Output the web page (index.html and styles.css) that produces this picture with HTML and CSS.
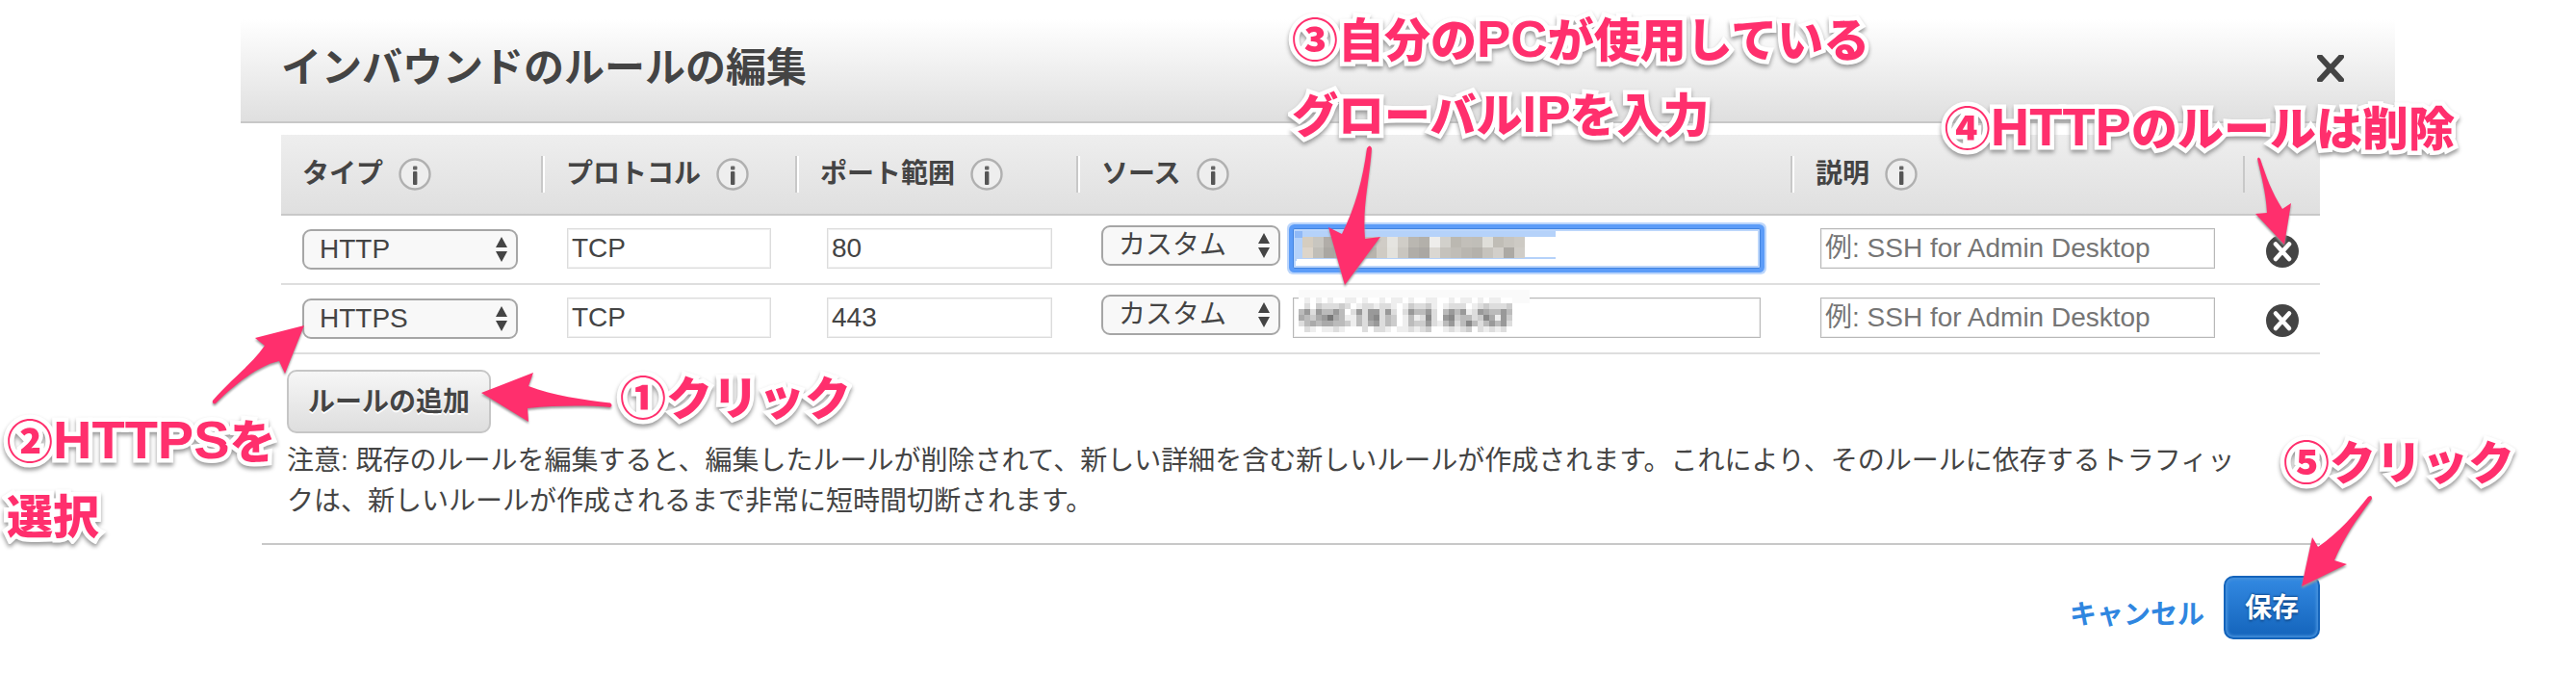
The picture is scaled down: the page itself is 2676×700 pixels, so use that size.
FILE: index.html
```html
<!DOCTYPE html>
<html lang="ja">
<head>
<meta charset="utf-8">
<title>インバウンドのルールの編集</title>
<link rel="stylesheet" href="styles.css">
</head>
<body>
<svg class="defs" aria-hidden="true">
  <symbol id="info" viewBox="0 0 34 34"><circle cx="17" cy="17" r="15.5" fill="#eee" stroke="#b0b0b0" stroke-width="2.4"/><rect x="15" y="8.5" width="4.4" height="4" rx="1" fill="#666"/><rect x="15" y="14" width="4.4" height="14" rx="1" fill="#555"/></symbol>
  <symbol id="updown" viewBox="0 0 14 26"><path d="M7 0l6 11H1zM7 26l6-11H1z" fill="#444"/></symbol>
  <symbol id="remove" viewBox="0 0 34 34"><circle cx="17" cy="17" r="17" fill="#444"/><path d="M10 9.500l14 15.500M24 9.500L10 25" stroke="#fff" stroke-width="4.600" stroke-linecap="round"/></symbol>
</svg>
<main class="dialog">
  <header class="dialog-head">
    <h1>インバウンドのルールの編集</h1>
    <button class="icon-button" type="button" aria-label="閉じる"><svg width="28" height="28" viewBox="0 0 28 28"><path d="M3 2l22 24M25 2L3 26" stroke="#444" stroke-width="6" stroke-linecap="round"/></svg></button>
  </header>
  <section class="dialog-body">
    <table class="rules">
      <colgroup><col class="col-type"><col class="col-protocol"><col class="col-port"><col><col class="col-note"><col class="col-remove"></colgroup>
      <thead>
        <tr>
          <th scope="col"><div class="label first">タイプ<svg class="info"><use href="#info"/></svg></div></th>
          <th scope="col"><div class="label">プロトコル<svg class="info"><use href="#info"/></svg></div></th>
          <th scope="col"><div class="label">ポート範囲<svg class="info"><use href="#info"/></svg></div></th>
          <th scope="col"><div class="label">ソース<svg class="info"><use href="#info"/></svg></div></th>
          <th scope="col"><div class="label">説明<svg class="info"><use href="#info"/></svg></div></th>
          <td></td>
        </tr>
      </thead>
      <tbody>
        <tr>
          <td class="cell-type"><div class="pick"><select aria-label="タイプ"><option>HTTP</option></select><svg class="updown"><use href="#updown"/></svg></div></td>
          <td class="cell-protocol"><input class="field" aria-label="プロトコル" value="TCP"></td>
          <td class="cell-port"><input class="field" aria-label="ポート範囲" value="80"></td>
          <td class="cell-source"><div class="source">
            <div class="pick"><select aria-label="ソース"><option>カスタム</option></select><svg class="updown"><use href="#updown"/></svg></div>
            <div class="address"><input class="field strong focused" aria-label="ソース IP"><svg class="mask" id="mask-selected" width="280" height="50" aria-hidden="true"></svg></div>
          </div></td>
          <td class="cell-note"><input class="field strong" aria-label="説明" placeholder="例: SSH for Admin Desktop"></td>
          <td class="cell-remove"><button class="icon-button" type="button" aria-label="削除"><svg width="34" height="34"><use href="#remove"/></svg></button></td>
        </tr>
        <tr>
          <td class="cell-type"><div class="pick"><select aria-label="タイプ"><option>HTTPS</option></select><svg class="updown"><use href="#updown"/></svg></div></td>
          <td class="cell-protocol"><input class="field" aria-label="プロトコル" value="TCP"></td>
          <td class="cell-port"><input class="field" aria-label="ポート範囲" value="443"></td>
          <td class="cell-source"><div class="source">
            <div class="pick"><select aria-label="ソース"><option>カスタム</option></select><svg class="updown"><use href="#updown"/></svg></div>
            <div class="address"><input class="field strong" aria-label="ソース IP"><svg class="mask" id="mask-plain" width="280" height="50" aria-hidden="true"></svg></div>
          </div></td>
          <td class="cell-note"><input class="field strong" aria-label="説明" placeholder="例: SSH for Admin Desktop"></td>
          <td class="cell-remove"><button class="icon-button" type="button" aria-label="削除"><svg width="34" height="34"><use href="#remove"/></svg></button></td>
        </tr>
      </tbody>
    </table>
    <button class="add" type="button">ルールの追加</button>
    <p class="notice">注意: 既存のルールを編集すると、編集したルールが削除されて、新しい詳細を含む新しいルールが作成されます。これにより、そのルールに依存するトラフィックは、新しいルールが作成されるまで非常に短時間切断されます。</p>
  </section>
  <footer class="dialog-foot">
    <a href="#" class="cancel">キャンセル</a>
    <button class="save" type="button">保存</button>
  </footer>
</main>

<p class="callout step-add">①クリック</p>
<p class="callout step-type">②<span class="latin">HTTPS</span>を<br>選択</p>
<p class="callout step-ip">③自分の<span class="latin">PC</span>が使用している<br>グローバル<span class="latin">IP</span>を入力</p>
<p class="callout step-remove">④<span class="latin">HTTP</span>のルールは削除</p>
<p class="callout step-save">⑤クリック</p>

<svg class="arrow arrow-add" width="140" height="60" viewBox="498 382 140 60"><path d="M500 408L554 387L549 401C575 411 605 415 634 418.500Q637 421 634 423C610 421 580 421 548 424L549 438Z"/></svg>
<svg class="arrow arrow-type" width="104" height="90" viewBox="216 334 104 90"><path d="M316 338L296 388L290 375C270 379 245 398 224 419Q220 420 221 416C240 394 260 380 275 359L265 351Z"/></svg>
<svg class="arrow arrow-ip" width="64" height="152" viewBox="1376 148 64 152"><path d="M1397 296L1380 236L1394 243C1408 215 1416 185 1420 154Q1423 149 1425 154C1423 185 1415 215 1418 248L1434 246Z"/></svg>
<svg class="arrow arrow-remove" width="48" height="96" viewBox="2338 160 48 96"><path d="M2373 254L2343 222L2355 221C2354 200 2349 183 2345 165Q2346 162 2348 165C2354 183 2360 200 2371 217L2380 211Z"/></svg>
<svg class="arrow arrow-save" width="80" height="104" viewBox="2387 510 80 104"><path d="M2391 609L2402 558L2408 568C2430 553 2446 534 2460 516Q2464 513 2464 518C2448 540 2436 556 2425 582L2438 586Z"/></svg>
<script src="mask.js"></script>
</body>
</html>
```
FILE: styles.css
```css
* { box-sizing: border-box; }
body {
  margin: 0;
  padding-top: 20px;
  position: relative;
  background: #fff;
  color: #444;
  font-family: "Liberation Sans", "Noto Sans CJK JP", sans-serif;
  font-size: 28px;
  overflow-x: hidden;
}
.defs { position: absolute; width: 0; height: 0; }
button, input, select { font: inherit; color: inherit; margin: 0; }
.dialog { margin: 0 188px 32px 250px; }

.dialog-head {
  display: flex;
  align-items: center;
  justify-content: space-between;
  height: 108px;
  padding: 0 53px 4px 42px;
  background: linear-gradient(#fff, #dfdfdf);
  border-bottom: 2px solid #c8c8c8;
}
h1 { margin: 0; font-size: 42px; line-height: 60px; }
.icon-button { display: block; padding: 0; border: 0; background: none; }
.icon-button svg { display: block; }

.dialog-body { padding: 12px 78px 22px 42px; }
.rules { width: 100%; table-layout: fixed; border-collapse: separate; border-spacing: 0; }
.col-type { width: 272px; }
.col-protocol { width: 264px; }
.col-port { width: 292px; }
.col-note { width: 470px; }
.col-remove { width: 78px; }
thead tr { background: linear-gradient(#eee, #dfdfdf); }
th, thead td { height: 84px; padding: 0; border-bottom: 2px solid #c8c8c8; text-align: left; }
.label {
  display: flex;
  align-items: center;
  gap: 16px;
  height: 38px;
  padding-left: 22px;
  border-left: 2px solid #fff;
  border-right: 2px solid #c8c8c8;
  line-height: 34px;
}
.label.first { border-left: 0; }
.info { width: 34px; height: 34px; }

tbody td { height: 72px; padding: 0; vertical-align: top; border-bottom: 2px solid #dedede; }
tbody .cell-type { padding: 14px 26px 0 22px; }
tbody .cell-protocol { padding: 13px 27px 0 25px; }
tbody .cell-port { padding: 13px 27px 0 31px; }
tbody .cell-source { padding: 10px 33px 0 24px; }
tbody .cell-note { padding: 13px 31px 0 29px; }
tbody .cell-remove { padding: 20px 22px 0; }

.pick { position: relative; }
.pick select {
  display: block;
  appearance: none;
  width: 100%;
  height: 42px;
  padding: 0 40px 2px 16px;
  border: 2px solid #a6a6a6;
  border-radius: 9px;
  background: #f8f8f8;
}
.updown { position: absolute; right: 10px; top: 8px; width: 14px; height: 26px; pointer-events: none; }
.field {
  display: block;
  width: 100%;
  height: 42px;
  padding: 0 4px;
  border: 1px solid #dcdcdc;
  box-shadow: inset 0 0 0 1px #f0f0f0;
  background: #fff;
  outline: 0;
}
.field.strong { border-color: #b8b8b8; }
.field::placeholder { color: #757575; opacity: 1; }
.field.focused { border-color: #4284e0; box-shadow: inset 0 0 0 2px #bcd6fb, 0 0 0 4px #5c9cf8, 0 0 0 6px #bcd6fb; border-radius: 2px; }
.source { display: flex; gap: 13px; }
.source .pick { flex: 0 0 186px; }
.address { position: relative; flex: 1; margin-top: 3px; }
.mask { position: absolute; left: 0; top: -8px; pointer-events: none; }

.add, .save { display: block; height: 66px; font-weight: bold; border-radius: 10px; padding: 0 20px 4px; }
.add {
  margin: 16px 0 8px 6px;
  border: 2px solid #c6c6c6;
  background: linear-gradient(#f6f6f6, #dedede);
  text-shadow: 0 2px 0 #fff;
}
.notice { margin: 0; padding: 0 74px 0 6px; line-height: 42px; }
.dialog-foot {
  display: flex;
  justify-content: flex-end;
  align-items: flex-start;
  gap: 20px;
  margin: 0 78px 0 22px;
  padding-top: 32px;
  border-top: 2px solid #c8c8c8;
}
.cancel { margin-top: 20px; line-height: 42px; color: #2f86e0; font-weight: bold; text-decoration: none; }
.save {
  border: 2px solid #1464bb;
  background: linear-gradient(#3389e2, #1464bb);
  box-shadow: inset 0 0 3px 2px #4590dc;
  color: #fff;
  text-shadow: 0 -1px 2px #124f94, 0 2px 2px #124f94;
}

.callout {
  position: absolute;
  margin: 0;
  font-size: 48px;
  font-weight: 900;
  line-height: 78px;
  white-space: nowrap;
  color: #ff2f6d;
  -webkit-text-stroke: 9px #fff;
  paint-order: stroke fill;
  filter: drop-shadow(0 3px 2px #999);
}
.latin { font-size: 56px; line-height: 48px; }
.step-ip .latin { font-size: 53px; }
.step-add { left: 644px; top: 376px; }
.step-type { left: 7px; top: 421px; }
.step-ip { left: 1342px; top: 4px; }
.step-remove { right: 126px; top: 96px; }
.step-save { right: 64px; top: 443px; }
.arrow { position: absolute; overflow: visible; fill: #ff2f6d; filter: drop-shadow(0 2px 1px #999); pointer-events: none; }
.arrow-add { left: 498px; top: 382px; }
.arrow-type { left: 216px; top: 334px; }
.arrow-ip { left: 1376px; top: 148px; }
.arrow-remove { right: 290px; top: 160px; }
.arrow-save { right: 209px; top: 510px; }
```
FILE: mask.js
```javascript
function cell(svg, x, y, w, h, fill) {
  const r = document.createElementNS("http://www.w3.org/2000/svg", "rect");
  Object.entries({ x, y, width: w, height: h, fill }).forEach(([k, v]) => r.setAttribute(k, v));
  svg.append(r);
}

const selected = document.getElementById("mask-selected");
cell(selected, 2, 11, 271, 31, "#b5d2fa");
cell(selected, 4, 40, 269, 4, "#fff");
cell(selected, 241, 17, 33, 21, "#fff");
cell(selected, 2, 11, 8, 7, "#8fb9f7");
[
  "d5cdc0 c8c6c0 b1ada8 b8b4ae c0bcb6 c4c0b9 c6c2bb d0ccc6 e5e4e0 d0cdc7 bab7b1 b3b0aa eeedeb d2d0cb bbb8b1 c2bfb9 c0beb8 dfded9 c0bdb6 c8c5bf cdcac4",
  "ddd5ca c0beb8 aaa7a2 b0ada6 b8b4ae b8b4ad b8b4ad cfcbc4 e3e2dd c9c6c0 b0ada8 aaa7a3 dad7d2 c5c2bc c0bdb7 b9b6b0 b4b1ab c6c3bd d2cfca aca9a4 d0cdc8",
].forEach((row, r) => row.split(" ").forEach((c, i) => cell(selected, 10 + i * 11, 17 + r * 11, 11, 11, "#" + c)));

const plain = document.getElementById("mask-plain");
cell(plain, 6, 0, 240, 14, "#fafafa");
[
  "fefefeffeefeffefeefeffeeffefeefefeeff",
  "fdfcdddcdfeddeddefecddcefedddfedcdddc",
  "b9d9bb9bfd9d99d9dfd9bb9dfb9b9ed9abb9b",
  "abca97abeebd98dbcfebed8df98cbbdc8ae9c",
  "dbabaabbcebda9dbcfebcc9deb9db8bdb9b9d",
  "fdefeedefffdfddefeededcffededcfdededf",
].forEach((row, r) => [...row].forEach((c, i) => cell(plain, 6 + i * 6, 8 + r * 6, 6, 6, "#" + c + c + c)));
```
